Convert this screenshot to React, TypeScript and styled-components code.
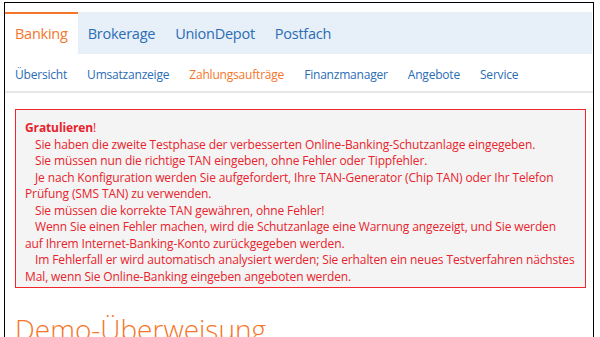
import styled, { createGlobalStyle } from 'styled-components'

const orange = '#f5762b'
const blue = '#2a6db5'
const red = '#e8232c'

const GlobalStyle = createGlobalStyle`
  html, body {
    margin: 0;
    padding: 0;
    background: #fff;
    overflow: hidden;
  }
  body {
    font-family: "Open Sans", "Noto Sans", sans-serif;
  }
`

const Frame = styled.div`
  margin: 2px 0 0 4px;
  width: 588px;
  height: 400px;
  border: 1px solid #000;
  border-bottom: none;
  padding-top: 9px;
`

const TabBar = styled.nav`
  display: flex;
  height: 42px;
  background: #e7eff8;
  margin-right: 1px;
`

const Tab = styled.a<{ $active?: boolean }>`
  display: flex;
  align-items: center;
  padding: 0 10px 2px;
  font-size: 14.5px;
  letter-spacing: -0.25px;
  color: ${p => (p.$active ? orange : blue)};
  background: ${p => (p.$active ? '#fff' : 'transparent')};
  border-top: 2px solid ${p => (p.$active ? orange : 'transparent')};
  text-decoration: none;
  cursor: pointer;
`

const SubNav = styled.nav`
  display: flex;
  gap: 20px;
  height: 39px;
  align-items: center;
  padding: 4px 10px 0;
  border-bottom: 2px solid #e6e6e6;
  box-sizing: border-box;
`

const SubLink = styled.a<{ $active?: boolean }>`
  font-size: 12px;
  letter-spacing: -0.2px;
  color: ${p => (p.$active ? orange : blue)};
  text-decoration: none;
  cursor: pointer;
`

const Content = styled.main`
  padding: 16px 7px 0 10px;
`

const Alert = styled.div`
  border: 1px solid #f0262c;
  background: #f4f4f4;
  color: ${red};
  font-size: 12px;
  letter-spacing: -0.12px;
  line-height: 16.5px;
  padding: 10px 9px 2px;
  margin-bottom: 24px;
`

const Line = styled.p<{ $indent?: boolean }>`
  margin: 0;
  white-space: nowrap;
  text-indent: ${p => (p.$indent ? '10px' : '0')};
`

const Strong = styled.b`
  font-weight: 700;
`

const Heading = styled.h1`
  margin: 0;
  font-size: 28px;
  font-weight: 300;
  line-height: 34px;
  color: ${orange};
`

const tabs = ['Banking', 'Brokerage', 'UnionDepot', 'Postfach']
const links = ['Übersicht', 'Umsatzanzeige', 'Zahlungsaufträge', 'Finanzmanager', 'Angebote', 'Service']

export default function App() {
  return (
    <>
      <GlobalStyle />
      <Frame>
        <TabBar>
          {tabs.map((t, i) => (
            <Tab key={t} $active={i === 0}>{t}</Tab>
          ))}
        </TabBar>
        <SubNav>
          {links.map((l, i) => (
            <SubLink key={l} $active={i === 2}>{l}</SubLink>
          ))}
        </SubNav>
        <Content>
          <Alert>
            <Line><Strong>Gratulieren</Strong>!</Line>
            <Line $indent>Sie haben die zweite Testphase der verbesserten Online-Banking-Schutzanlage eingegeben.</Line>
            <Line $indent>Sie müssen nun die richtige TAN eingeben, ohne Fehler oder Tippfehler.</Line>
            <Line $indent>Je nach Konfiguration werden Sie aufgefordert, Ihre TAN-Generator (Chip TAN) oder Ihr Telefon</Line>
            <Line>Prüfung (SMS TAN) zu verwenden.</Line>
            <Line $indent>Sie müssen die korrekte TAN gewähren, ohne Fehler!</Line>
            <Line $indent>Wenn Sie einen Fehler machen, wird die Schutzanlage eine Warnung angezeigt, und Sie werden</Line>
            <Line>auf Ihrem Internet-Banking-Konto zurückgegeben werden.</Line>
            <Line $indent>Im Fehlerfall er wird automatisch analysiert werden; Sie erhalten ein neues Testverfahren nächstes</Line>
            <Line>Mal, wenn Sie Online-Banking eingeben angeboten werden.</Line>
          </Alert>
          <Heading>Demo-Überweisung</Heading>
        </Content>
      </Frame>
    </>
  )
}
